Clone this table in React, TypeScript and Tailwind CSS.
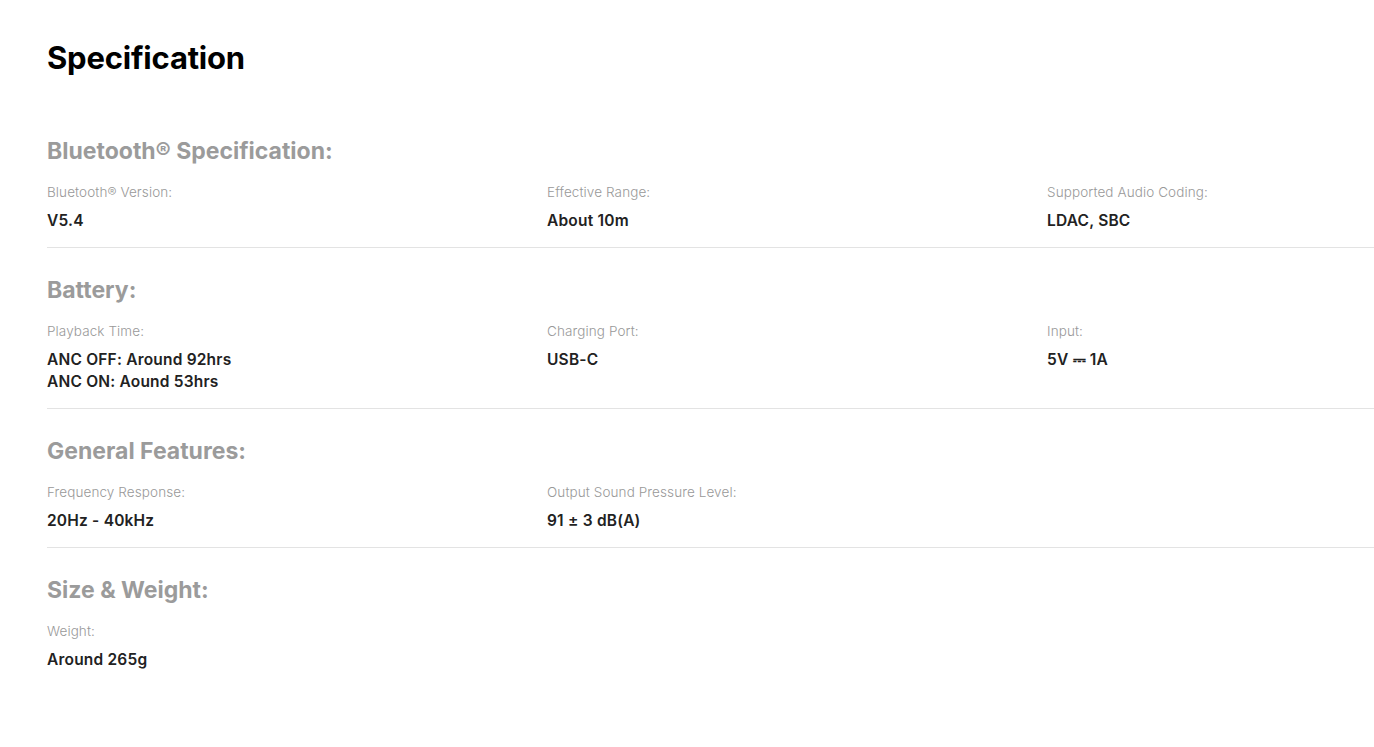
import React from "react";

type Item = { label: string; value: string[] };
type Section = { title: string; items: Item[]; last?: boolean };

const sections: Section[] = [
  {
    title: "Bluetooth® Specification:",
    items: [
      { label: "Bluetooth® Version:", value: ["V5.4"] },
      { label: "Effective Range:", value: ["About 10m"] },
      { label: "Supported Audio Coding:", value: ["LDAC, SBC"] },
    ],
  },
  {
    title: "Battery:",
    items: [
      { label: "Playback Time:", value: ["ANC OFF: Around 92hrs", "ANC ON: Aound 53hrs"] },
      { label: "Charging Port:", value: ["USB-C"] },
      { label: "Input:", value: ["5V ⎓ 1A"] },
    ],
  },
  {
    title: "General Features:",
    items: [
      { label: "Frequency Response:", value: ["20Hz - 40kHz"] },
      { label: "Output Sound Pressure Level:", value: ["91 ± 3 dB(A)"] },
    ],
  },
  {
    title: "Size & Weight:",
    items: [{ label: "Weight:", value: ["Around 265g"] }],
    last: true,
  },
];

export default function App() {
  return (
    <div
      className="min-h-[747px] bg-white pl-[47px] pt-[38px]"
      style={{ fontFamily: "Inter, 'Noto Sans', sans-serif" }}
    >
      <h1 className="text-[31px] font-bold leading-[40px] text-black tracking-[-0.2px]">Specification</h1>
      <div className="mt-[31px]">
        {sections.map((s) => (
          <div
            key={s.title}
            className={"pt-[26px] pb-[15px] " + (s.last ? "" : "border-b border-[#e3e3e3]")}
          >
            <h2 className="text-[23px] font-bold leading-[32px] text-[#9b9b9b]">{s.title}</h2>
            <div className="mt-[15px] grid grid-cols-[500px_500px_1fr]">
              {s.items.map((it) => (
                <div key={it.label}>
                  <div className="text-[13.5px] font-light leading-[20px] tracking-[0.1px] text-[#999]">{it.label}</div>
                  <div className="mt-[8px] text-[15.5px] font-semibold leading-[22px] tracking-[0.2px] text-[#222]">
                    {it.value.map((v) => (
                      <div key={v}>{v}</div>
                    ))}
                  </div>
                </div>
              ))}
            </div>
          </div>
        ))}
      </div>
    </div>
  );
}
